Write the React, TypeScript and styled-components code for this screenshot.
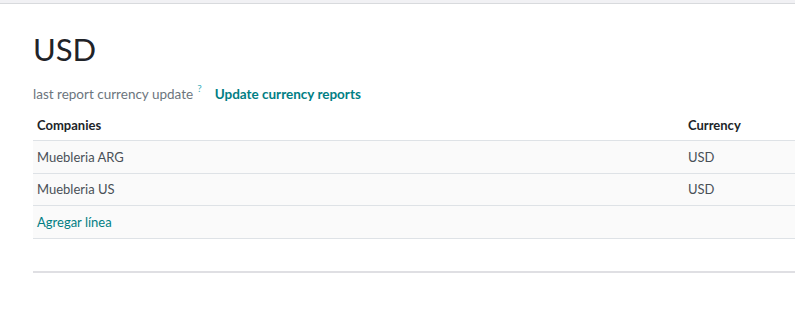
import { createGlobalStyle, styled } from "styled-components";

const GlobalStyle = createGlobalStyle`
  * { box-sizing: border-box; }
  body {
    margin: 0;
    background: #ffffff;
    font-family: Lato, "Noto Sans", sans-serif;
    color: #212529;
  }
`;

const TopBar = styled.div`
  height: 4px;
  background: #f1f1f4;
  border-bottom: 1px solid #d8dadd;
`;

const Sheet = styled.div`
  padding: 25px 0 0 33px;
`;

const Title = styled.h1`
  margin: 0;
  font-size: 31px;
  font-weight: 400;
  line-height: 40px;
  color: #1f2328;
`;

const InfoRow = styled.div`
  display: flex;
  align-items: baseline;
  margin-top: 17px;
  height: 22px;
`;

const Label = styled.span`
  font-size: 13.5px;
  color: #6c757d;
`;

const Help = styled.sup`
  font-size: 10px;
  line-height: 0;
  vertical-align: 7px;
  color: #3fb0bd;
  margin-left: 4px;
`;

const LinkButton = styled.button`
  border: none;
  background: none;
  padding: 0;
  margin-left: 13px;
  font-family: inherit;
  font-size: 13.5px;
  font-weight: 700;
  color: #017e84;
  cursor: pointer;
`;

const Table = styled.div`
  margin-top: 1px;
  display: flex;
  flex-direction: column;
`;

const Row = styled.div<{ $head?: boolean }>`
  display: grid;
  grid-template-columns: 1fr 107px;
  align-items: center;
  height: ${(p) => (p.$head ? "32px" : "32.5px")};
  padding-left: 4px;
  background: ${(p) => (p.$head ? "#ffffff" : "#fafafa")};
  border-bottom: 1px solid #dee2e6;
  font-size: 13px;
  font-weight: ${(p) => (p.$head ? 700 : 400)};
  color: ${(p) => (p.$head ? "#212529" : "#495057")};
`;

const AddLink = styled.a`
  color: #017e84;
  text-decoration: none;
  cursor: pointer;
`;

const Footer = styled.div`
  margin-top: 32px;
  border-top: 2px solid #dfdfe3;
`;

const lines = [
  { company: "Muebleria ARG", currency: "USD" },
  { company: "Muebleria US", currency: "USD" },
];

export default function App() {
  return (
    <>
      <GlobalStyle />
      <TopBar />
      <Sheet>
        <Title>USD</Title>
        <InfoRow>
          <Label>
            last report currency update
            <Help>?</Help>
          </Label>
          <LinkButton>Update currency reports</LinkButton>
        </InfoRow>
        <Table>
          <Row $head>
            <span>Companies</span>
            <span>Currency</span>
          </Row>
          {lines.map((l) => (
            <Row key={l.company}>
              <span>{l.company}</span>
              <span>{l.currency}</span>
            </Row>
          ))}
          <Row>
            <AddLink>Agregar línea</AddLink>
            <span />
          </Row>
        </Table>
        <Footer />
      </Sheet>
    </>
  );
}
